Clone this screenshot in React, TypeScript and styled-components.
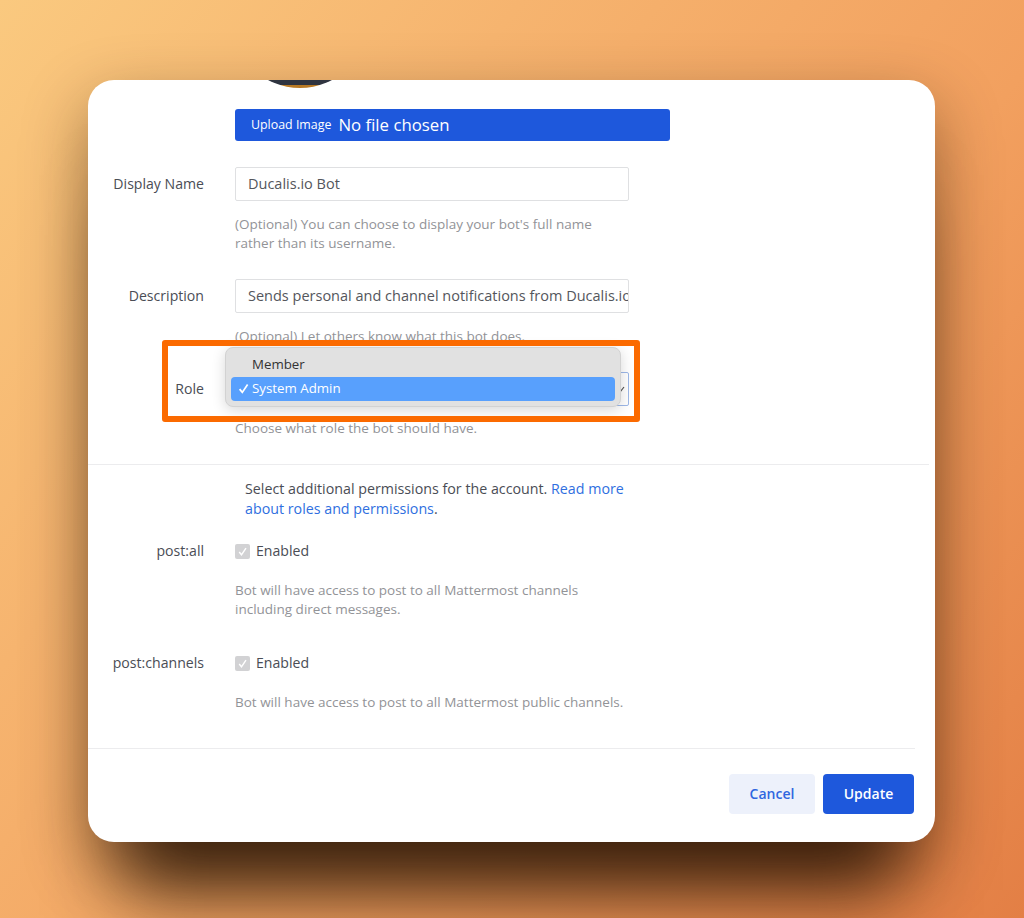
import styled, { createGlobalStyle } from "styled-components";

const GlobalStyle = createGlobalStyle`
  html, body {
    margin: 0;
    padding: 0;
  }
  body {
    font-family: "Open Sans", "Liberation Sans", sans-serif;
    color: #3f4350;
  }
`;

const Check = ({ size, color }: { size: number; color: string }) => (
  <svg width={size} height={size} viewBox="0 0 12 12" fill="none">
    <path d="M2.4 6.6 L4.9 9.6 L9.8 2.4" stroke={color} strokeWidth="1.6" />
  </svg>
);

export default function App() {
  return (
    <Page>
      <GlobalStyle />
      <Card>
        <AvatarClip>
          <Avatar />
        </AvatarClip>
        <UploadBar>
          <UploadLabel>Upload Image</UploadLabel>
          <FileName>No file chosen</FileName>
        </UploadBar>

        <FieldRow $top={26}>
          <Label>Display Name</Label>
          <Input>Ducalis.io Bot</Input>
        </FieldRow>
        <Help $top={14}>
          (Optional) You can choose to display your bot's full name
          <br />
          rather than its username.
        </Help>

        <FieldRow $top={26}>
          <Label>Description</Label>
          <Input>Sends personal and channel notifications from Ducalis.io</Input>
        </FieldRow>
        <Help $top={14}>(Optional) Let others know what this bot does.</Help>

        <RoleRow>
          <Label>Role</Label>
          <RoleSelect>
            <svg width="8" height="8" viewBox="0 0 8 8" fill="none">
              <path d="M1 5 L3 7 L7 2" stroke="#555" strokeWidth="1.2" />
            </svg>
          </RoleSelect>
          <Menu>
            <MenuItem>
              <MenuTick />
              Member
            </MenuItem>
            <MenuItem $selected>
              <MenuTick>
                <Check size={13} color="#fff" />
              </MenuTick>
              System Admin
            </MenuItem>
          </Menu>
          <Highlight />
        </RoleRow>
        <Help $top={13}>Choose what role the bot should have.</Help>

        <Divider $width={841} $top={26} />

        <Intro>
          Select additional permissions for the account. <Link>Read more</Link>
          <br />
          <Link>about roles and permissions</Link>.
        </Intro>

        <CheckRow $top={22}>
          <Label>post:all</Label>
          <CheckBox>
            <Check size={11} color="#fff" />
          </CheckBox>
          <CheckText>Enabled</CheckText>
        </CheckRow>
        <Help $top={20}>
          Bot will have access to post to all Mattermost channels
          <br />
          including direct messages.
        </Help>

        <CheckRow $top={34}>
          <Label>post:channels</Label>
          <CheckBox>
            <Check size={11} color="#fff" />
          </CheckBox>
          <CheckText>Enabled</CheckText>
        </CheckRow>
        <Help $top={20}>Bot will have access to post to all Mattermost public channels.</Help>

        <Divider $width={827} $top={36} />

        <Footer>
          <CancelButton>Cancel</CancelButton>
          <UpdateButton>Update</UpdateButton>
        </Footer>
      </Card>
    </Page>
  );
}

const Page = styled.div`
  width: 1024px;
  height: 918px;
  padding: 80px 0 0 88px;
  box-sizing: border-box;
  overflow: hidden;
  background: linear-gradient(128deg, #fac97f 0%, #f6b46f 30%, #f2a05f 62%, #e37f45 100%);
`;

const Card = styled.div`
  width: 847px;
  height: 762px;
  background: #fff;
  border-radius: 26px;
  box-shadow:
    0 84px 70px -36px rgba(40, 20, 5, 0.85),
    0 24px 64px 0 rgba(40, 20, 5, 0.42);
  overflow: hidden;
`;

const AvatarClip = styled.div`
  height: 8px;
  padding-left: 144px;
  overflow: hidden;
`;

const Avatar = styled.div`
  width: 136px;
  height: 136px;
  margin-top: -128px;
  border-radius: 50%;
  background: linear-gradient(#2f3440 calc(100% - 3px), #b97a25 0);
`;

const UploadBar = styled.div`
  display: flex;
  align-items: center;
  width: 435px;
  height: 32px;
  margin: 21px 0 0 147px;
  padding: 0 0 2px 16px;
  box-sizing: border-box;
  background: #1e58dc;
  border-radius: 3px;
  color: #fff;
`;

const UploadLabel = styled.span`
  font-size: 12.4px;
`;

const FileName = styled.span`
  margin-left: 7px;
  font-size: 16.8px;
`;

const FieldRow = styled.div<{ $top: number }>`
  display: flex;
  align-items: center;
  gap: 31px;
  margin-top: ${({ $top }) => $top}px;
`;

const Label = styled.div`
  width: 116px;
  flex: none;
  text-align: right;
  font-size: 14.1px;
  line-height: 20px;
  color: #4a4d55;
`;

const Input = styled.div`
  width: 394px;
  height: 34px;
  padding: 0 0 0 12px;
  box-sizing: border-box;
  border: 1px solid #dfe0e2;
  border-radius: 2px;
  font-size: 14.5px;
  line-height: 32px;
  color: #54565c;
  white-space: nowrap;
  overflow: hidden;
`;

const Help = styled.div<{ $top: number }>`
  margin: ${({ $top }) => $top}px 0 0 147px;
  font-size: 13.5px;
  line-height: 19px;
  color: #929397;
`;

const RoleRow = styled.div`
  position: relative;
  display: flex;
  align-items: center;
  gap: 31px;
  height: 34px;
  margin-top: 26px;
`;

const RoleSelect = styled.div`
  display: flex;
  align-items: center;
  justify-content: flex-end;
  width: 394px;
  height: 34px;
  padding-right: 3px;
  box-sizing: border-box;
  border: 1px solid #9db8e8;
  border-radius: 2px;
`;

const Menu = styled.div`
  position: absolute;
  left: 137px;
  top: -25px;
  width: 396px;
  height: 60px;
  padding: 5px;
  box-sizing: border-box;
  display: flex;
  flex-direction: column;
  justify-content: flex-end;
  background: #e1e1e1;
  border: 1px solid #d2d2d2;
  border-radius: 8px;
  box-shadow: 0 3px 14px rgba(0, 0, 0, 0.16);
`;

const MenuItem = styled.div<{ $selected?: boolean }>`
  display: flex;
  align-items: center;
  height: 24px;
  padding: 0 0 2px 6px;
  box-sizing: border-box;
  border-radius: 4px;
  font-size: 13.3px;
  color: ${({ $selected }) => ($selected ? "#fff" : "#333")};
  background: ${({ $selected }) => ($selected ? "#58a0fd" : "transparent")};
`;

const MenuTick = styled.span`
  display: flex;
  width: 15px;
  flex: none;
`;

const Highlight = styled.div`
  position: absolute;
  left: 74px;
  top: -32px;
  width: 478px;
  height: 82px;
  box-sizing: border-box;
  border: 6px solid #fb6a00;
  border-radius: 3px;
  pointer-events: none;
`;

const Divider = styled.div<{ $width: number; $top: number }>`
  width: ${({ $width }) => $width}px;
  height: 1px;
  margin-top: ${({ $top }) => $top}px;
  background: #ececee;
`;

const Intro = styled.div`
  margin: 14px 0 0 157px;
  font-size: 14.25px;
  line-height: 20px;
  color: #4a4d55;
`;

const Link = styled.span`
  color: #2f6fe0;
`;

const CheckRow = styled.div<{ $top: number }>`
  display: flex;
  align-items: center;
  margin-top: ${({ $top }) => $top}px;
`;

const CheckBox = styled.span`
  display: flex;
  align-items: center;
  justify-content: center;
  width: 15px;
  height: 15px;
  margin-left: 31px;
  background: #d2d2d4;
  border-radius: 2px;
`;

const CheckText = styled.span`
  margin-left: 6px;
  font-size: 14.1px;
  line-height: 20px;
  color: #4a4d55;
`;

const Footer = styled.div`
  display: flex;
  justify-content: flex-end;
  gap: 8px;
  width: 826px;
  margin-top: 25px;
`;

const CancelButton = styled.div`
  width: 86px;
  height: 40px;
  background: #edf1fb;
  border-radius: 4px;
  font-size: 14px;
  font-weight: 600;
  line-height: 40px;
  text-align: center;
  color: #2f66e0;
`;

const UpdateButton = styled(CancelButton)`
  width: 91px;
  background: #1e58dc;
  color: #fff;
`;
